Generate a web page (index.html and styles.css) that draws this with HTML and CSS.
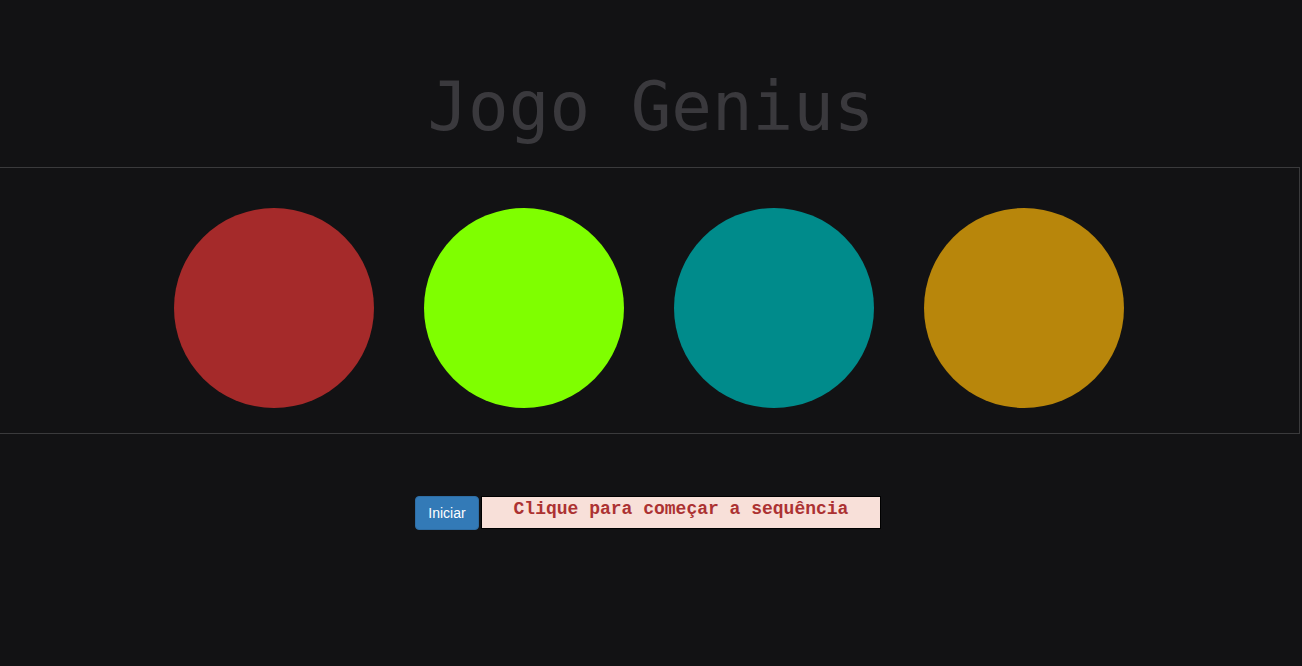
FILE: index.html
```html
<!DOCTYPE html>
<html lang="pt-BR">
<head>
<meta charset="utf-8">
<title>Jogo Genius</title>
<link rel="stylesheet" href="styles.css">
</head>
<body>
<h1 class="title">Jogo Genius</h1>
<div class="board">
  <div class="pad pad-red"></div>
  <div class="pad pad-green"></div>
  <div class="pad pad-blue"></div>
  <div class="pad pad-yellow"></div>
</div>
<div class="controls">
  <button class="btn-start">Iniciar</button>
  <div class="message">Clique para começar a sequência</div>
</div>
</body>
</html>
```

FILE: styles.css
```css
html, body {
  margin: 0;
  padding: 0;
  background: #121214;
  height: 100%;
}
body {
  font-family: "Liberation Sans", Arial, sans-serif;
}
.title {
  margin: 0;
  padding-top: 87px;
  height: 167px;
  box-sizing: border-box;
  text-align: center;
  font-family: "DejaVu Sans Mono", monospace;
  font-weight: normal;
  font-size: 67.5px;
  line-height: 40px;
  color: #3a393d;
}
.board {
  width: 1300px;
  box-sizing: border-box;
  border-top: 1px solid #3a3a3c;
  border-bottom: 1px solid #3a3a3c;
  border-right: 1px solid #3a3a3c;
  padding: 40px 0 25px 174px;
  display: flex;
  gap: 50px;
}
.pad {
  width: 200px;
  height: 200px;
  border-radius: 50%;
}
.pad-red { background: #a52a2a; }
.pad-green { background: #7fff00; }
.pad-blue { background: #008b8b; }
.pad-yellow { background: #b8860b; }
.controls {
  display: flex;
  align-items: stretch;
  gap: 2px;
  margin-top: 62px;
  padding-left: 415px;
}
.btn-start {
  width: 64px;
  height: 34px;
  border: 1px solid #2e6da4;
  border-radius: 4px;
  background: #337ab7;
  color: #fff;
  font-family: "Liberation Sans", Arial, sans-serif;
  font-size: 14px;
  padding: 0;
}
.message {
  width: 400px;
  height: 33px;
  box-sizing: border-box;
  border: 1px solid #000;
  background: #f8e0d9;
  color: #ac3232;
  font-family: "Liberation Mono", "Courier New", monospace;
  font-weight: bold;
  font-size: 18px;
  line-height: 25px;
  text-align: center;
}
```
